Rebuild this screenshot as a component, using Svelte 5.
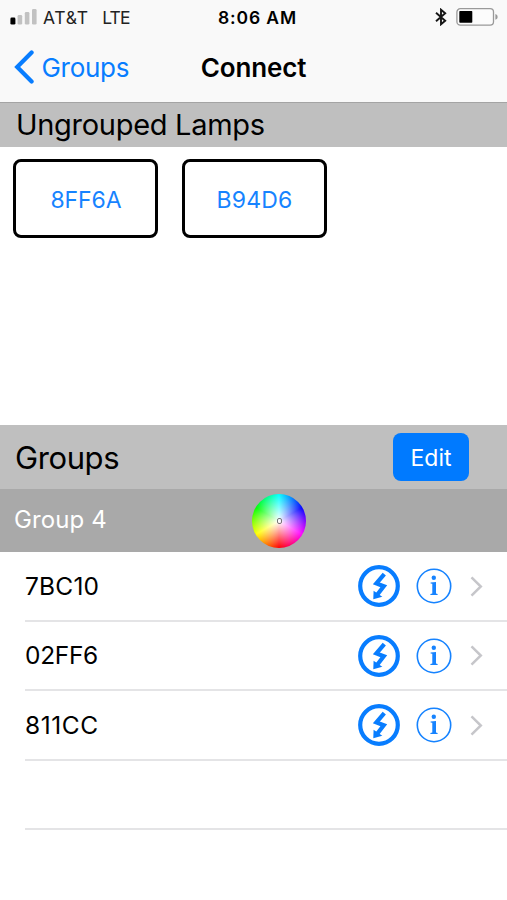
<script>
  const ungrouped = [
    { id: '8FF6A', tracking: -0.1 },
    { id: 'B94D6', tracking: 0.15 }
  ];
  const lamps = [
    { id: '7BC10', tracking: 0.2 },
    { id: '02FF6', tracking: -0.3 },
    { id: '811CC', tracking: 0.55 }
  ];
</script>

<main>
  <header>
    <div class="status">
      <div class="carrier">
        <svg width="27" height="16" viewBox="0 0 27 16">
          <rect x="0.4" y="8.6" width="5" height="7" rx="1.3" fill="#000" />
          <rect x="7.6" y="6" width="4.6" height="9.6" rx="1.3" fill="#c2c2c2" />
          <rect x="14.8" y="3" width="4.6" height="12.6" rx="1.3" fill="#c2c2c2" />
          <rect x="22" y="0" width="4.6" height="15.6" rx="1.3" fill="#c2c2c2" />
        </svg>
        <span class="att">AT&amp;T</span>
        <span class="lte">LTE</span>
      </div>
      <span class="time">8:06 AM</span>
      <div class="power">
        <svg width="12" height="18" viewBox="0 0 12 18">
          <path d="M1 4.8 10.2 12.8 6 16.3V1.7L10.2 5.2 1 13.2" fill="none" stroke="#161616" stroke-width="1.9" />
        </svg>
        <svg class="battery" width="43" height="18" viewBox="0 0 43 18">
          <rect x="0.9" y="0.7" width="36.6" height="16.4" rx="3.4" fill="#fcfcfc" stroke="#999" stroke-width="1.3" />
          <rect x="3.3" y="3" width="13" height="11.8" rx="0.7" fill="#000" />
          <path d="M39.4 6q2.3.7 2.3 2.9t-2.3 2.9z" fill="#999" />
        </svg>
      </div>
    </div>
    <nav>
      <a href="#groups" class="back">
        <svg width="20" height="34" viewBox="0 0 20 34">
          <path d="M17.6 2.6 3.2 17 17.6 31.4" fill="none" stroke="#087dff" stroke-width="4.2" stroke-linecap="round" />
        </svg>
        <span>Groups</span>
      </a>
      <h1>Connect</h1>
    </nav>
  </header>

  <section class="ungrouped">
    <h2><span>Ungrouped Lamps</span></h2>
    <div class="cards">
      {#each ungrouped as lamp}
        <button class="card"><span style="letter-spacing: {lamp.tracking}px">{lamp.id}</span></button>
      {/each}
    </div>
  </section>

  <section>
    <div class="bar">
      <h2 class="title">Groups</h2>
      <button class="edit"><span>Edit</span></button>
    </div>
    <div class="group">
      <span>Group 4</span>
      <div class="wheel"><i></i></div>
    </div>
    <ul>
      {#each lamps as lamp}
        <li>
          <span class="name" style="letter-spacing: {lamp.tracking}px">{lamp.id}</span>
          <svg class="flash" width="42" height="42" viewBox="0 0 42 42">
            <circle cx="21" cy="21" r="18.8" fill="none" stroke="#087dff" stroke-width="4.2" />
            <path d="M26.3 9.2 18.4 18.4 25.8 21.2 19.4 29.6" fill="none" stroke="#087dff" stroke-width="4.2" />
            <path d="M15.6 25.8 24.3 31.7 15.3 34.2Z" fill="#087dff" />
          </svg>
          <svg class="info" width="36" height="36" viewBox="0 0 36 36">
            <circle cx="18" cy="18" r="16.7" fill="none" stroke="#1683ff" stroke-width="1.6" />
            <circle cx="17.8" cy="9.7" r="2.2" fill="#1683ff" />
            <path d="M14.6 14.6 20 14V25.4L21.6 26V27H14.4V26L16.3 25.4V15.8L14.6 15.6Z" fill="#1683ff" />
          </svg>
          <svg class="chevron" width="13" height="21" viewBox="0 0 13 21">
            <path d="M1.5 1.3 10.8 10.5 1.5 19.7" fill="none" stroke="#c6c6ca" stroke-width="2.5" />
          </svg>
        </li>
      {/each}
      <li></li>
    </ul>
  </section>
</main>

<style>
  :global(body) { margin: 0; background: #fff; }
  main {
    width: 507px;
    height: 900px;
    overflow: hidden;
    background: #fff;
    color: #000;
    font-family: Inter, "Liberation Sans", sans-serif;
    display: flex;
    flex-direction: column;
  }
  svg { display: block; flex: none; }
  button { border: 0; margin: 0; padding: 0; font-family: inherit; display: flex; align-items: center; justify-content: center; box-sizing: border-box; }
  h1, h2, ul { margin: 0; padding: 0; font-weight: 400; }
  span, h1, .title { white-space: nowrap; }

  header { height: 102px; background: #f9f9f9; box-sizing: border-box; }
  .status { height: 34px; display: grid; grid-template-columns: 1fr auto 1fr; align-items: center; padding: 0 8px 0 10px; }
  .carrier { display: flex; align-items: center; height: 34px; color: #222; font-size: 17.5px; }
  .att { margin-left: 6px; letter-spacing: 0.7px; }
  .lte { margin-left: 13.5px; letter-spacing: -0.8px; }
  .time { font-size: 17.5px; font-weight: 600; letter-spacing: 0.9px; padding-left: 6px; }
  .power { display: flex; justify-content: flex-end; align-items: center; }
  .battery { margin-left: 9px; }
  nav { height: 66px; display: grid; grid-template-columns: 1fr auto 1fr; align-items: center; padding: 0 14px; }
  .back { display: flex; align-items: center; text-decoration: none; color: #087dff; font-size: 26px; letter-spacing: -0.3px; }
  .back span { margin-left: 7.5px; }
  h1 { font-size: 26px; font-weight: 600; letter-spacing: -0.15px; }

  .ungrouped { height: 323px; }
  .ungrouped h2 { height: 45px; box-sizing: border-box; border-top: 1px solid #a4a4a4; background: #bfbfbf; padding: 0 0 2px 16px; display: flex; align-items: center; font-size: 29px; letter-spacing: -0.3px; }
  .cards { display: flex; gap: 23.5px; padding: 12px 13px; }
  .card { width: 145px; height: 79px; border: 3px solid #000; border-radius: 8px; background: #fff; color: #1683ff; font-size: 23px; padding: 2px 0 0 1px; }

  .bar { height: 64px; background: #bfbfbf; display: flex; align-items: center; justify-content: space-between; padding: 0 38px 0 15px; }
  .title { font-size: 31px; letter-spacing: -0.4px; }
  .edit { width: 76px; height: 48px; border-radius: 8px; background: #007aff; color: #fff; font-size: 23px; padding-top: 1px; }
  .group { height: 63px; background: #a9a9a9; color: #fff; display: flex; align-items: center; padding-left: 14px; font-size: 24px; }
  .group span { width: 238px; padding-bottom: 2px; letter-spacing: 0.1px; }
  .wheel {
    width: 54px; height: 54px; border-radius: 50%; display: flex; align-items: center; justify-content: center;
    background: radial-gradient(circle closest-side, #fff 0%, rgba(255,255,255,0) 100%), conic-gradient(#0ff, #00f 60deg, #f0f 120deg, #f00 180deg, #ff0 240deg, #0f0 300deg, #0ff);
  }
  .wheel i { width: 5px; height: 6px; box-sizing: border-box; border: 1px solid #777; border-radius: 2px; }

  ul { list-style: none; padding-left: 25px; }
  li { height: 69.6px; box-sizing: border-box; border-bottom: 2px solid #e4e4e6; display: flex; align-items: center; padding: 1px 24px 0 0; }
  .name { flex: 1; font-size: 24.5px; padding-bottom: 1px; }
  .info { margin-left: 16px; }
  .chevron { margin-left: 18px; }
</style>
